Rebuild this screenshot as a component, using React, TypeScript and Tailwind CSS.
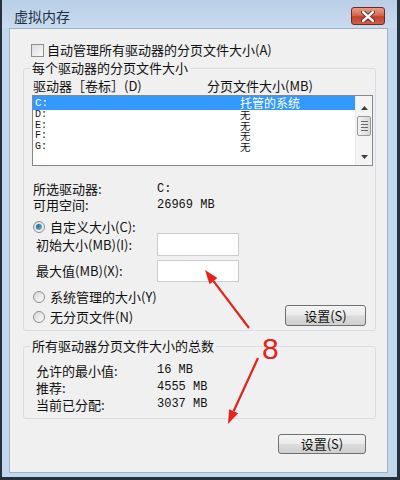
import React from "react";

const CJK = { fontFamily: '"Noto Sans CJK SC", "Liberation Sans", sans-serif' };
const MONO = { fontFamily: '"Liberation Mono", "Noto Sans CJK SC", monospace' };

function Radio({ checked }: { checked?: boolean }) {
  return (
    <span className="w-[12px] h-[12px] rounded-full border border-[#8c8c8c] bg-gradient-to-br from-[#d8d8d8] to-[#fbfbfb] flex items-center justify-center shrink-0">
      {checked && (
        <span className="w-[6px] h-[6px] rounded-full bg-gradient-to-br from-[#1d5a7a] to-[#5ec0e6]" />
      )}
    </span>
  );
}

function Win7Button({ w, h }: { w: string; h: string }) {
  return (
    <div
      className={`${w} ${h} border border-[#707070] rounded-[3px] bg-[linear-gradient(#f4f4f4_0%,#ebebeb_48%,#dcdcdc_52%,#cfcfcf_100%)] flex items-center justify-center text-[13px] text-[#111]`}
      style={CJK}
    >
      设置(S)
    </div>
  );
}

export default function App() {
  return (
    <div className="relative w-[400px] h-[480px] bg-[#c3d7ed] border-l-2 border-r-[3px] border-b-[3px] border-[#26313e] flex flex-col overflow-hidden">
      {/* Title bar */}
      <div className="h-[28px] pt-[4px] flex items-center shrink-0 bg-gradient-to-b from-[#b9cfe7] to-[#c9dbef]">
        <span className="ml-[12px] text-[14px] text-[#1c2f45]" style={CJK}>
          虚拟内存
        </span>
        <div className="ml-auto mr-[12px] w-[34px] h-[18px] rounded-[3px] border border-[#6e2a20] bg-[linear-gradient(#e99a86_0%,#d86a52_45%,#c2402a_55%,#d0604a_100%)] flex items-center justify-center">
          <svg width="14" height="11" viewBox="0 0 14 11">
            <path d="M2 1 L12 10 M12 1 L2 10" stroke="#5a1a12" strokeWidth="4.2" strokeLinecap="round" />
            <path d="M2 1 L12 10 M12 1 L2 10" stroke="#ffffff" strokeWidth="2.4" strokeLinecap="round" />
          </svg>
        </div>
      </div>

      {/* Content */}
      <div className="flex-1 ml-[7px] mr-[9px] mb-[4px] border border-[#9fb3c8] bg-[#f0f0f0] flex flex-col text-[#111]" style={CJK}>
        {/* Auto manage checkbox */}
        <div className="mt-[13px] h-[16px] pl-[21px] flex items-center text-[13px] leading-[16px]">
          <span className="w-[13px] h-[13px] border border-[#8f8f8f] bg-gradient-to-br from-[#dcdcdc] to-[#fbfbfb] shrink-0" />
          <span className="ml-[3px]">自动管理所有驱动器的分页文件大小(A)</span>
        </div>

        {/* Group 1 */}
        <fieldset className="mt-[2px] ml-[13px] mr-[11px] border border-[#d5dfe5] rounded-[3px] pb-[5px]">
          <legend className="ml-[6px] px-[2px] text-[13px] leading-[16px]">每个驱动器的分页文件大小</legend>

          <div className="mt-[2px] h-[16px] pl-[9px] grid grid-cols-[174px_1fr] text-[13px] leading-[16px]">
            <span>驱动器［卷标］(D)</span>
            <span>分页文件大小(MB)</span>
          </div>

          {/* List box */}
          <div className="mt-[1px] ml-[8px] w-[341px] h-[71px] border border-[#828790] bg-white flex">
            <div className="flex-1 flex flex-col">
              <div className="h-[14px] bg-[#3399ff] text-white grid grid-cols-[207px_1fr] items-center shrink-0">
                <span className="pl-[2px] text-[11px] leading-[14px]" style={MONO}>C:</span>
                <span className="text-[12px] leading-[14px]">托管的系统</span>
              </div>
              {["D:", "E:", "F:", "G:"].map((d) => (
                <div key={d} className="h-[10.5px] grid grid-cols-[207px_1fr] items-center shrink-0">
                  <span className="pl-[2px] text-[10px] leading-[10.5px]" style={MONO}>{d}</span>
                  <span className="text-[10.5px] leading-[10.5px]">无</span>
                </div>
              ))}
            </div>
            {/* Scrollbar */}
            <div className="w-[17px] bg-[#f4f4f4] border-l border-[#ececec] flex flex-col items-center">
              <div className="h-[17px] flex items-center justify-center mt-[3px]">
                <svg width="7" height="4" viewBox="0 0 7 4"><path d="M0 4 L3.5 0 L7 4 Z" fill="#404040" /></svg>
              </div>
              <div className="w-[14px] h-[20px] rounded-[2px] border border-[#9a9a9a] bg-gradient-to-r from-[#f2f2f2] to-[#d9d9d9] flex flex-col items-center justify-center gap-[2px]">
                <span className="w-[7px] h-[1px] bg-[#6a6a6a]" />
                <span className="w-[7px] h-[1px] bg-[#6a6a6a]" />
                <span className="w-[7px] h-[1px] bg-[#6a6a6a]" />
                <span className="w-[7px] h-[1px] bg-[#6a6a6a]" />
              </div>
              <div className="mt-auto h-[17px] flex items-center justify-center">
                <svg width="7" height="4" viewBox="0 0 7 4"><path d="M0 0 L7 0 L3.5 4 Z" fill="#404040" /></svg>
              </div>
            </div>
          </div>

          {/* Drive info */}
          <div className="mt-[15px] pl-[9px] text-[13px] leading-[16px]">
            <div className="h-[16px] grid grid-cols-[124px_1fr] items-center">
              <span>所选驱动器:</span>
              <span className="text-[12px]" style={MONO}>C:</span>
            </div>
            <div className="h-[16px] grid grid-cols-[124px_1fr] items-center">
              <span>可用空间:</span>
              <span className="text-[12px]" style={MONO}>26969 MB</span>
            </div>
          </div>

          {/* Custom size */}
          <div className="mt-[8px] pl-[9px] h-[12px] flex items-center text-[13px] leading-[12px]">
            <Radio checked />
            <span className="ml-[5px]">自定义大小(C):</span>
          </div>
          <div className="pl-[12px] h-[23px] grid grid-cols-[121px_82px] items-center text-[13px]">
            <span>初始大小(MB)(I):</span>
            <div className="h-[23px] border border-[#c9ccd3] bg-white" />
          </div>
          <div className="mt-[4px] pl-[12px] h-[22px] grid grid-cols-[121px_82px] items-center text-[13px]">
            <span>最大值(MB)(X):</span>
            <div className="h-[22px] border border-[#c9ccd3] bg-white" />
          </div>

          <div className="mt-[7px] flex items-end pl-[9px] pr-[9px]">
            <div className="flex flex-col gap-[4px] text-[13px] leading-[16px]">
              <div className="h-[16px] flex items-center">
                <Radio />
                <span className="ml-[5px]">系统管理的大小(Y)</span>
              </div>
              <div className="h-[16px] flex items-center">
                <Radio />
                <span className="ml-[5px]">无分页文件(N)</span>
              </div>
            </div>
            <div className="ml-auto mb-[-1px]">
              <Win7Button w="w-[81px]" h="h-[21px]" />
            </div>
          </div>
        </fieldset>

        {/* Group 2 */}
        <fieldset className="mt-[7px] ml-[13px] mr-[11px] border border-[#d5dfe5] rounded-[3px] pb-[5px]">
          <legend className="ml-[6px] px-[2px] text-[13px] leading-[16px]">所有驱动器分页文件大小的总数</legend>
          <div className="mt-[8px] pl-[12px] text-[13px] leading-[17px]">
            <div className="h-[17px] grid grid-cols-[121px_1fr] items-center">
              <span>允许的最小值:</span>
              <span className="text-[12px]" style={MONO}>16 MB</span>
            </div>
            <div className="h-[17px] grid grid-cols-[121px_1fr] items-center">
              <span>推荐:</span>
              <span className="text-[12px]" style={MONO}>4555 MB</span>
            </div>
            <div className="h-[17px] grid grid-cols-[121px_1fr] items-center">
              <span>当前已分配:</span>
              <span className="text-[12px]" style={MONO}>3037 MB</span>
            </div>
          </div>
        </fieldset>

        <div className="mt-[15px] self-end mr-[21px]">
          <Win7Button w="w-[88px]" h="h-[20px]" />
        </div>
      </div>

      {/* Red annotations overlay */}
      <svg className="absolute left-[-2px] top-0 pointer-events-none" width="400" height="480" viewBox="0 0 400 480">
        <line x1="249" y1="328" x2="213.5" y2="281.2" stroke="#e3231c" strokeWidth="2.2" />
        <polygon points="205,270 217.4,278.1 209.5,284.2" fill="#e3231c" />
        <line x1="258" y1="358" x2="233.6" y2="411.2" stroke="#e3231c" strokeWidth="2.2" />
        <polygon points="228,424 238.2,413.2 229.1,409.2" fill="#e3231c" />
      </svg>
      <span
        className="absolute left-[260px] top-[334px] text-[30px] leading-none text-[#e3231c]"
        style={{ fontFamily: '"Liberation Sans", sans-serif' }}
      >
        8
      </span>
    </div>
  );
}
